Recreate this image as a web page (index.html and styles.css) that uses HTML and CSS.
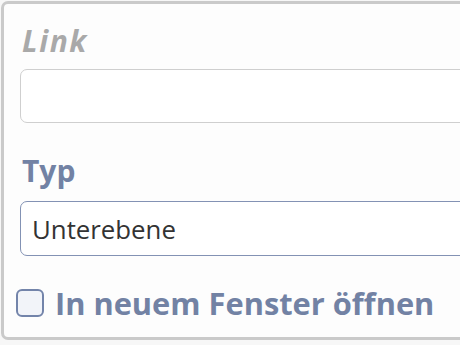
FILE: index.html
```html
<!DOCTYPE html>
<html lang="de">
<head>
<meta charset="utf-8">
<link rel="stylesheet" href="styles.css">
</head>
<body>
<div class="panel">
  <label class="label label-muted" for="link">Link</label>
  <input class="field field-muted" id="link" type="text">
  <label class="label label-type" for="typ">Typ</label>
  <select class="field field-active" id="typ">
    <option>Unterebene</option>
  </select>
  <label class="check-row">
    <span class="check-box"></span>
    <span class="check-text">In neuem Fenster öffnen</span>
  </label>
</div>
</body>
</html>
```
FILE: styles.css
```css
html, body {
  margin: 0;
  padding: 0;
}
body {
  width: 460px;
  height: 345px;
  overflow: hidden;
  background: #f7f7f7;
  font-family: "Open Sans", "Liberation Sans", sans-serif;
}
.panel {
  margin: 1px 0 0 1px;
  width: 620px;
  height: 339px;
  border: 3px solid #cacaca;
  border-radius: 7px;
  background: #fdfdfd;
  padding: 19px 0 0 16px;
  box-sizing: border-box;
  display: flex;
  flex-direction: column;
  align-items: flex-start;
}
.label {
  font-size: 29px;
  line-height: 36px;
  font-weight: 700;
  padding-left: 2px;
}
.label-muted {
  color: #a9a9a9;
  font-style: italic;
  font-size: 30px;
  letter-spacing: 1.6px;
}
.label-type {
  color: #7282a4;
  margin-top: 30px;
  font-size: 30px;
}
.field {
  appearance: none;
  -webkit-appearance: none;
  box-sizing: border-box;
  width: 560px;
  border-radius: 7px;
  background: #fff;
  font-family: inherit;
  font-size: 25.8px;
  color: #333;
  padding: 0 11px;
  margin: 0;
  outline: none;
}
.field-muted {
  height: 54px;
  border: 1.5px solid #cfcfcf;
  margin-top: 10px;
}
.field-active {
  height: 55px;
  border: 1.5px solid #8392b4;
  margin-top: 12px;
}
.check-row {
  margin-top: 26.5px;
  display: flex;
  align-items: center;
  gap: 11px;
  margin-left: -4px;
}
.check-box {
  width: 28px;
  height: 28px;
  box-sizing: border-box;
  border: 2.5px solid #7384aa;
  border-radius: 6px;
  background: #f2f4f9;
}
.check-text {
  font-size: 30.8px;
  line-height: 40px;
  font-weight: 700;
  color: #7282a4;
}
```
